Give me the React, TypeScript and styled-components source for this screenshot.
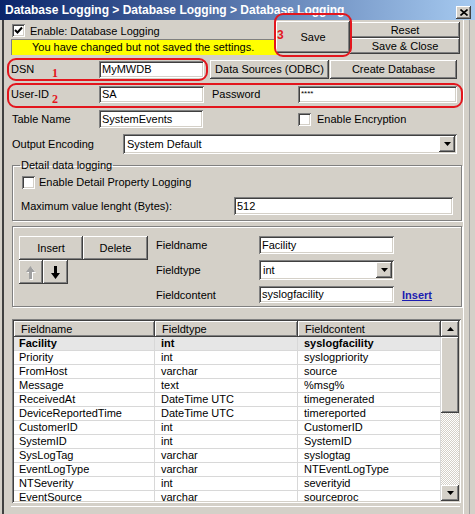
import React from 'react';
import styled, { createGlobalStyle, css } from 'styled-components';

const GlobalStyle = createGlobalStyle`
  html, body {
    margin: 0;
    padding: 0;
    background: #d4d0c8;
  }
  body {
    font-family: "Liberation Sans", Arial, sans-serif;
    font-size: 11px;
    color: #000;
  }
  * {
    box-sizing: border-box;
  }
`;

const raised = css`
  background: #d4d0c8;
  box-shadow: inset -1px -1px #404040, inset 1px 1px #fff, inset -2px -2px #808080, inset 2px 2px #d4d0c8;
`;

const sunken = css`
  background: #fff;
  box-shadow: inset 1px 1px #808080, inset -1px -1px #fff, inset 2px 2px #404040, inset -2px -2px #d4d0c8;
`;

const etched = css`
  border: 1px solid #808080;
  box-shadow: inset 1px 1px #fff, 1px 1px #fff;
`;

const Window = styled.div`
  width: 475px;
  height: 514px;
  display: flex;
  flex-direction: column;
  overflow: hidden;
  background: #d4d0c8;
`;

const TitleBar = styled.div`
  height: 20px;
  flex: none;
  display: flex;
  align-items: center;
  justify-content: space-between;
  padding: 0 4px 0 5px;
  background: linear-gradient(to right, #0a246a, #a6caf0);
  color: #fff;
  font-weight: bold;
  font-size: 12px;
  white-space: nowrap;
`;

const CloseButton = styled.span`
  ${raised};
  width: 15px;
  height: 13px;
  margin-top: 4px;
  display: flex;
  align-items: center;
  justify-content: center;
`;

const Frame = styled.div`
  flex: 1;
  display: flex;
  min-height: 0;
`;

const Panel = styled.div`
  flex: 1;
  display: flex;
  flex-direction: column;
  margin-left: 2px;
  border-left: 2px solid #404040;
  padding: 0 3px 0 7px;
  min-width: 0;
`;

const RightStrip = styled.div`
  width: 12px;
  flex: none;
  border-left: 1px solid #fff;
  display: flex;
  justify-content: flex-end;
  padding-right: 5px;
  &::after {
    content: '';
    width: 1px;
    background: #a0a0a0;
  }
`;

const TopRow = styled.div`
  display: grid;
  grid-template-columns: 263px 76px 1fr;
  height: 35px;
  flex: none;
`;

const TopLeft = styled.div`
  display: flex;
  flex-direction: column;
  padding-top: 3px;
`;

const CheckRow = styled.div<{ $gap?: number }>`
  display: flex;
  align-items: center;
  gap: ${(p) => p.$gap ?? 5}px;
  height: 15px;
  white-space: nowrap;
`;

const Box = styled.span`
  ${sunken};
  width: 13px;
  height: 13px;
  flex: none;
  display: flex;
  align-items: center;
  justify-content: center;
  margin-left: 1px;
`;

const Banner = styled.div`
  margin-top: 1px;
  margin-right: -3px;
  height: 16px;
  line-height: 16px;
  padding-left: 21px;
  background: #ffff00;
  box-shadow: inset 1px 1px #808080;
  white-space: nowrap;
`;

const Annotated = styled.div`
  position: relative;
`;

const SaveCell = styled(Annotated)`
  padding: 1px 0 2px 2px;
`;

const Button = styled.div<{ $w?: number; $h: number }>`
  ${raised};
  width: ${(p) => (p.$w ? `${p.$w}px` : 'auto')};
  height: ${(p) => p.$h}px;
  flex: none;
  display: flex;
  align-items: center;
  justify-content: center;
  white-space: nowrap;
`;

const ButtonStack = styled.div`
  display: flex;
  flex-direction: column;
  padding-top: 2px;
`;

const Callout = styled.span<{ $t: number; $r: number; $b: number; $l: number }>`
  position: absolute;
  top: ${(p) => p.$t}px;
  right: ${(p) => p.$r}px;
  bottom: ${(p) => p.$b}px;
  left: ${(p) => p.$l}px;
  border: 2px solid #e3161d;
  border-radius: 9px;
  pointer-events: none;
`;

const CalloutNum = styled.span<{ $t: number; $l: number; $serif?: boolean }>`
  position: absolute;
  top: ${(p) => p.$t}px;
  left: ${(p) => p.$l}px;
  color: #e3161d;
  font-weight: bold;
  font-size: 12px;
  line-height: 12px;
  font-family: ${(p) => (p.$serif ? '"Liberation Serif", serif' : '"Liberation Sans", Arial, sans-serif')};
`;

const FieldRow = styled.div<{ $mt: number; $h: number }>`
  display: flex;
  align-items: center;
  flex: none;
  margin-top: ${(p) => p.$mt}px;
  height: ${(p) => p.$h}px;
`;

const Group = styled(Annotated)`
  display: flex;
  align-items: center;
  align-self: stretch;
`;

const Label = styled.span<{ $w: number; $pl?: number }>`
  width: ${(p) => p.$w}px;
  padding-left: ${(p) => p.$pl ?? 0}px;
  flex: none;
  white-space: nowrap;
`;

const TextInput = styled.div<{ $w: number; $h: number }>`
  ${sunken};
  width: ${(p) => p.$w}px;
  height: ${(p) => p.$h}px;
  line-height: ${(p) => p.$h}px;
  padding-left: 3px;
  flex: none;
  white-space: nowrap;
  overflow: hidden;
`;

const Masked = styled.span`
  font-size: 8px;
  position: relative;
  top: -2px;
`;

const Select = styled.div<{ $w: number; $h: number }>`
  ${sunken};
  width: ${(p) => p.$w}px;
  height: ${(p) => p.$h}px;
  flex: none;
  display: flex;
  align-items: center;
  justify-content: space-between;
  padding: 2px 2px 2px 4px;
`;

const DropButton = styled.span`
  ${raised};
  width: 16px;
  align-self: stretch;
  display: flex;
  align-items: center;
  justify-content: center;
`;

const Fieldset = styled.fieldset`
  ${etched};
  margin: 5px -2px 0 1px;
  padding: 0 8px 5px 8px;
  min-width: 0;
  flex: none;
`;

const Legend = styled.legend`
  padding: 0 1px;
  margin-left: -1px;
  line-height: 12px;
`;

const Panel2 = styled.div`
  ${etched};
  margin: 5px -2px 0 1px;
  height: 81px;
  flex: none;
  display: flex;
  padding: 9px 0 0 6px;
  gap: 8px;
`;

const ButtonBlock = styled.div`
  display: grid;
  grid-template-columns: 24px 40px 65px;
  grid-template-rows: 24px 24px;
  width: 129px;
  align-self: flex-start;
`;

const WideButton = styled(Button)<{ $span: string }>`
  grid-column: ${(p) => p.$span};
`;

const FieldGrid = styled.div`
  display: grid;
  grid-template-columns: 103px 135px auto;
  grid-template-rows: 18px 20px 17px;
  row-gap: 6px;
  align-items: center;
  align-self: flex-start;
`;

const LinkText = styled.span`
  color: #1c1cb0;
  font-weight: bold;
  text-decoration: underline;
  margin-left: 8px;
`;

const ListFrame = styled.div`
  margin: 12px -1px 0 1px;
  height: 184px;
  flex: none;
  padding: 2px;
  background: #fff;
  box-shadow: inset 1px 1px #808080, inset -1px -1px #fff, inset 2px 2px #404040, inset -2px -2px #d4d0c8;
  display: flex;
`;

const ListArea = styled.div`
  flex: 1;
  overflow: hidden;
  display: flex;
  flex-direction: column;
`;

const columns = '141px 143px 143px';

const HeaderRow = styled.div`
  display: grid;
  grid-template-columns: ${columns};
  height: 16px;
  flex: none;
`;

const HeaderCell = styled.div`
  ${raised};
  padding-left: 7px;
  line-height: 16px;
  white-space: nowrap;
`;

const BodyRow = styled.div<{ $active?: boolean }>`
  display: grid;
  grid-template-columns: ${columns};
  height: 14px;
  flex: none;
  background: ${(p) => (p.$active ? '#e6e6e6' : '#fff')};
  font-weight: ${(p) => (p.$active ? 'bold' : 'normal')};
  border-bottom: 1px solid #d8d8d8;
`;

const Cell = styled.div<{ $first?: boolean }>`
  padding-left: ${(p) => (p.$first ? 5 : 6)}px;
  line-height: 13px;
  white-space: nowrap;
  overflow: hidden;
  border-right: 1px solid #d8d8d8;
`;

const Scrollbar = styled.div`
  width: 18px;
  flex: none;
  display: flex;
  flex-direction: column;
`;

const ScrollButton = styled.div<{ $h: number }>`
  ${raised};
  height: ${(p) => p.$h}px;
  flex: none;
  display: flex;
  align-items: center;
  justify-content: center;
`;

const Track = styled.div`
  flex: 1;
  background-color: #fff;
  background-image: repeating-conic-gradient(#d4d0c8 0 25%, #fff 0 50%);
  background-size: 2px 2px;
`;

const Footer = styled.div`
  margin-top: 3px;
  border-top: 1px solid #fff;
  flex: 1;
`;

const Check = () => (
  <svg width="9" height="9" viewBox="0 0 9 9">
    <polyline points="1,4 3.5,6.5 8,1.5" fill="none" stroke="#000" strokeWidth="2" />
  </svg>
);

const DownTriangle = () => (
  <svg width="7" height="4" viewBox="0 0 7 4">
    <polygon points="0,0 7,0 3.5,4" fill="#000" />
  </svg>
);

const UpTriangle = () => (
  <svg width="7" height="4" viewBox="0 0 7 4">
    <polygon points="0,4 7,4 3.5,0" fill="#000" />
  </svg>
);

const CloseIcon = () => (
  <svg width="8" height="7" viewBox="0 0 8 7">
    <path d="M0.5 0.5 L7.5 6.5 M7.5 0.5 L0.5 6.5" stroke="#000" strokeWidth="1.6" />
  </svg>
);

const ArrowUp = () => (
  <svg width="12" height="15" viewBox="0 0 12 15">
    <path d="M1 7 L5.5 1 L10 7 L7 7 L7 14 L4 14 L4 7 Z" fill="#fff" transform="translate(1 1)" />
    <path d="M1 7 L5.5 1 L10 7 L7 7 L7 14 L4 14 L4 7 Z" fill="#a0a0a0" />
  </svg>
);

const ArrowDown = () => (
  <svg width="11" height="15" viewBox="0 0 11 15">
    <path d="M4 1 L7 1 L7 8 L10 8 L5.5 14 L1 8 L4 8 Z" fill="#000" />
  </svg>
);

const rows = [
  { name: 'Facility', type: 'int', content: 'syslogfacility', active: true },
  { name: 'Priority', type: 'int', content: 'syslogpriority' },
  { name: 'FromHost', type: 'varchar', content: 'source' },
  { name: 'Message', type: 'text', content: '%msg%' },
  { name: 'ReceivedAt', type: 'DateTime UTC', content: 'timegenerated' },
  { name: 'DeviceReportedTime', type: 'DateTime UTC', content: 'timereported' },
  { name: 'CustomerID', type: 'int', content: 'CustomerID' },
  { name: 'SystemID', type: 'int', content: 'SystemID' },
  { name: 'SysLogTag', type: 'varchar', content: 'syslogtag' },
  { name: 'EventLogType', type: 'varchar', content: 'NTEventLogType' },
  { name: 'NTSeverity', type: 'int', content: 'severityid' },
  { name: 'EventSource', type: 'varchar', content: 'sourceproc' },
];

const App: React.FC = () => {
  return (
    <>
      <GlobalStyle />
      <Window>
        <TitleBar>
          <span>Database Logging &gt; Database Logging &gt; Database Logging</span>
          <CloseButton>
            <CloseIcon />
          </CloseButton>
        </TitleBar>
        <Frame>
          <Panel>
            <TopRow>
              <TopLeft>
                <CheckRow>
                  <Box>
                    <Check />
                  </Box>
                  Enable: Database Logging
                </CheckRow>
                <Banner>You have changed but not saved the settings.</Banner>
              </TopLeft>
              <SaveCell>
                <Button $w={74} $h={32}>Save</Button>
                <Callout $t={-7} $r={-2} $b={-2} $l={0} />
                <CalloutNum $t={9} $l={3}>3</CalloutNum>
              </SaveCell>
              <ButtonStack>
                <Button $h={16}>Reset</Button>
                <Button $h={16}>Save &amp; Close</Button>
              </ButtonStack>
            </TopRow>

            <FieldRow $mt={4} $h={20}>
              <Group>
                <Label $w={88}>DSN</Label>
                <TextInput $w={105} $h={17}>MyMWDB</TextInput>
                <Callout $t={-1} $r={-4} $b={-2} $l={-4} />
                <CalloutNum $t={8} $l={41} $serif>1</CalloutNum>
              </Group>
              <Button $w={119} $h={19} style={{ marginLeft: 6 }}>Data Sources (ODBC)</Button>
              <Button $w={127} $h={19} style={{ marginLeft: 1 }}>Create Database</Button>
            </FieldRow>

            <FieldRow $mt={6} $h={18}>
              <Group style={{ flex: 1 }}>
                <Label $w={88}>User-ID</Label>
                <TextInput $w={105} $h={17}>SA</TextInput>
                <Label $w={94} $pl={8}>Password</Label>
                <TextInput $w={159} $h={17}>
                  <Masked>****</Masked>
                </TextInput>
                <Callout $t={-2} $r={-3} $b={-5} $l={-4} />
                <CalloutNum $t={8} $l={41} $serif>2</CalloutNum>
              </Group>
            </FieldRow>

            <FieldRow $mt={7} $h={18}>
              <Label $w={88} $pl={1}>Table Name</Label>
              <TextInput $w={104} $h={18}>SystemEvents</TextInput>
              <CheckRow $gap={6} style={{ marginLeft: 94 }}>
                <Box />
                Enable Encryption
              </CheckRow>
            </FieldRow>

            <FieldRow $mt={6} $h={20}>
              <Label $w={112} $pl={1}>Output Encoding</Label>
              <Select $w={334} $h={20}>
                System Default
                <DropButton>
                  <DownTriangle />
                </DropButton>
              </Select>
            </FieldRow>

            <Fieldset>
              <Legend>Detail data logging</Legend>
              <FieldRow $mt={3} $h={16}>
                <CheckRow $gap={4}>
                  <Box />
                  Enable Detail Property Logging
                </CheckRow>
              </FieldRow>
              <FieldRow $mt={6} $h={19}>
                <Label $w={213}>Maximum value lenght (Bytes):</Label>
                <TextInput $w={219} $h={18}>512</TextInput>
              </FieldRow>
            </Fieldset>

            <Panel2>
              <ButtonBlock>
                <WideButton $span="1 / 3" $h={24}>Insert</WideButton>
                <WideButton $span="3 / 4" $h={24}>Delete</WideButton>
                <Button $h={24}>
                  <ArrowUp />
                </Button>
                <Button $w={25} $h={24}>
                  <ArrowDown />
                </Button>
              </ButtonBlock>
              <FieldGrid>
                <span>Fieldname</span>
                <TextInput $w={135} $h={18}>Facility</TextInput>
                <span />
                <span>Fieldtype</span>
                <Select $w={135} $h={20}>
                  int
                  <DropButton>
                    <DownTriangle />
                  </DropButton>
                </Select>
                <span />
                <span>Fieldcontent</span>
                <TextInput $w={135} $h={17}>syslogfacility</TextInput>
                <LinkText>Insert</LinkText>
              </FieldGrid>
            </Panel2>

            <ListFrame>
              <ListArea>
                <HeaderRow>
                  <HeaderCell>Fieldname</HeaderCell>
                  <HeaderCell>Fieldtype</HeaderCell>
                  <HeaderCell>Fieldcontent</HeaderCell>
                </HeaderRow>
                {rows.map((r) => (
                  <BodyRow key={r.name} $active={r.active}>
                    <Cell $first>{r.name}</Cell>
                    <Cell>{r.type}</Cell>
                    <Cell>{r.content}</Cell>
                  </BodyRow>
                ))}
              </ListArea>
              <Scrollbar>
                <ScrollButton $h={16}>
                  <UpTriangle />
                </ScrollButton>
                <ScrollButton $h={76} />
                <Track />
                <ScrollButton $h={16}>
                  <DownTriangle />
                </ScrollButton>
              </Scrollbar>
            </ListFrame>
            <Footer />
          </Panel>
          <RightStrip />
        </Frame>
      </Window>
    </>
  );
};

export default App;
